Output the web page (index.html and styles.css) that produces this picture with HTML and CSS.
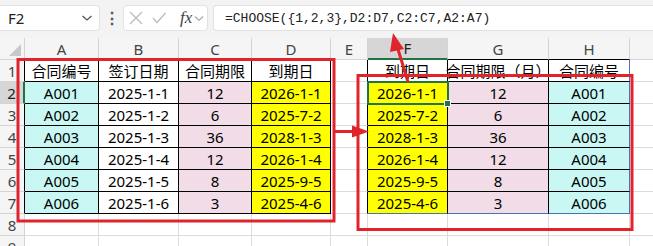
FILE: index.html
```html
<!DOCTYPE html>
<html lang="zh-CN">
<head>
<meta charset="utf-8">
<title>CHOOSE</title>
<link rel="stylesheet" href="styles.css">
</head>
<body>
<div class="app">
  <div class="fbar">
    <div class="namebox">
      <span class="name">F2</span>
      <svg class="chev" width="12" height="8" viewBox="0 0 12 8"><path d="M1.5 2 L6 6 L10.5 2" fill="none" stroke="#555" stroke-width="1.3"/></svg>
    </div>
    <div class="dots">⋮</div>
    <div class="fxbox">
      <svg width="14" height="14" viewBox="0 0 14 14"><path d="M1 1 L13 13 M13 1 L1 13" stroke="#bdbdbd" stroke-width="1.4" fill="none"/></svg>
      <svg width="14" height="12" viewBox="0 0 14 12"><path d="M1 6 L5 10.5 L13.5 1" stroke="#bdbdbd" stroke-width="1.4" fill="none"/></svg>
      <span class="fx">fx</span>
      <svg class="chev2" width="10" height="7" viewBox="0 0 10 7"><path d="M1 1.5 L5 5.5 L9 1.5" fill="none" stroke="#aaa" stroke-width="1.2"/></svg>
    </div>
    <div class="formula">=CHOOSE({1,2,3},D2:D7,C2:C7,A2:A7)</div>
  </div>

  <div class="sheet">
    <!-- header row -->
    <div class="c h corner"></div>
    <div class="c h bkb">A</div>
    <div class="c h bkb">B</div>
    <div class="c h bkb">C</div>
    <div class="c h bkb">D</div>
    <div class="c h">E</div>
    <div class="c h sel-col">F</div>
    <div class="c h bkb">G</div>
    <div class="c h bkb">H</div>
    <div class="c h"></div>

    <!-- row 1 -->
    <div class="c rh bkr">1</div>
    <div class="c bk">合同编号</div>
    <div class="c bk">签订日期</div>
    <div class="c bk">合同期限</div>
    <div class="c bk">到期日</div>
    <div class="c bkr"></div>
    <div class="c bk">到期日</div>
    <div class="c bk">合同期限（月）</div>
    <div class="c bk blr">合同编号</div>
    <div class="c"></div>

    <!-- row 2 -->
    <div class="c rh sel-row">2</div>
    <div class="c bk cy">A001</div>
    <div class="c bk">2025-1-1</div>
    <div class="c bk pk">12</div>
    <div class="c bk yl">2026-1-1</div>
    <div class="c bkr"></div>
    <div class="c bk yl active">2026-1-1</div>
    <div class="c bk pk">12</div>
    <div class="c bk cy blr">A001</div>
    <div class="c"></div>

    <!-- row 3 -->
    <div class="c rh bkr">3</div>
    <div class="c bk cy">A002</div>
    <div class="c bk">2025-1-2</div>
    <div class="c bk pk">6</div>
    <div class="c bk yl">2025-7-2</div>
    <div class="c bkr"></div>
    <div class="c bk yl">2025-7-2</div>
    <div class="c bk pk">6</div>
    <div class="c bk cy blr">A002</div>
    <div class="c"></div>

    <!-- row 4 -->
    <div class="c rh bkr">4</div>
    <div class="c bk cy">A003</div>
    <div class="c bk">2025-1-3</div>
    <div class="c bk pk">36</div>
    <div class="c bk yl">2028-1-3</div>
    <div class="c bkr"></div>
    <div class="c bk yl">2028-1-3</div>
    <div class="c bk pk">36</div>
    <div class="c bk cy blr">A003</div>
    <div class="c"></div>

    <!-- row 5 -->
    <div class="c rh bkr">5</div>
    <div class="c bk cy">A004</div>
    <div class="c bk">2025-1-4</div>
    <div class="c bk pk">12</div>
    <div class="c bk yl">2026-1-4</div>
    <div class="c bkr"></div>
    <div class="c bk yl">2026-1-4</div>
    <div class="c bk pk">12</div>
    <div class="c bk cy blr">A004</div>
    <div class="c"></div>

    <!-- row 6 -->
    <div class="c rh bkr">6</div>
    <div class="c bk cy">A005</div>
    <div class="c bk">2025-1-5</div>
    <div class="c bk pk">8</div>
    <div class="c bk yl">2025-9-5</div>
    <div class="c bkr"></div>
    <div class="c bk yl">2025-9-5</div>
    <div class="c bk pk">8</div>
    <div class="c bk cy blr">A005</div>
    <div class="c"></div>

    <!-- row 7 -->
    <div class="c rh bkr">7</div>
    <div class="c bk cy">A006</div>
    <div class="c bk">2025-1-6</div>
    <div class="c bk pk">3</div>
    <div class="c bk yl">2025-4-6</div>
    <div class="c bkr"></div>
    <div class="c bk yl blb">2025-4-6</div>
    <div class="c bk pk blb">3</div>
    <div class="c bk cy blr blb">A006</div>
    <div class="c"></div>

    <!-- row 8 -->
    <div class="c rh">8</div>
    <div class="c"></div><div class="c"></div><div class="c"></div><div class="c"></div>
    <div class="c"></div><div class="c"></div><div class="c"></div><div class="c"></div><div class="c"></div>

    <!-- row 9 -->
    <div class="c rh">9</div>
    <div class="c"></div><div class="c"></div><div class="c"></div><div class="c"></div>
    <div class="c"></div><div class="c"></div><div class="c"></div><div class="c"></div><div class="c"></div>
  </div>

  <svg class="annot" width="653" height="246" viewBox="0 0 653 246">
    <rect x="18" y="59.5" width="316" height="161.5" fill="none" stroke="#e0242c" stroke-width="3"/>
    <rect x="358" y="75.5" width="274" height="154" fill="none" stroke="#e0242c" stroke-width="3"/>
    <line x1="335" y1="131.5" x2="356" y2="131.5" stroke="#e0242c" stroke-width="3"/>
    <polygon points="352,125.5 369,131.5 352,137.5" fill="#e0242c"/>
    <line x1="408" y1="82" x2="397" y2="46" stroke="#e0242c" stroke-width="3"/>
    <polygon points="393,33 404,49 390,52" fill="#e0242c"/>
  </svg>
</div>
</body>
</html>
```

FILE: styles.css
```css
html, body {
  margin: 0;
  padding: 0;
  background: #ffffff;
}

.app {
  position: relative;
  width: 653px;
  height: 246px;
  overflow: hidden;
  font-family: "Noto Sans", "Noto Sans CJK SC", sans-serif;
}

/* formula bar */
.fbar {
  display: flex;
  align-items: center;
  height: 38px;
  background: #f3f3f3;
  box-sizing: border-box;
  padding-bottom: 2px;
}

.namebox {
  display: flex;
  align-items: center;
  justify-content: space-between;
  width: 100px;
  height: 26px;
  box-sizing: border-box;
  background: #ffffff;
  border: 1px solid #e2e2e2;
  border-left: none;
  border-radius: 0 4px 4px 0;
  padding: 0 6px 0 8px;
}

.name {
  font-size: 15px;
  color: #222;
}

.dots {
  width: 23px;
  text-align: center;
  font-size: 16px;
  color: #555;
  font-weight: bold;
}

.fxbox {
  display: flex;
  align-items: center;
  gap: 9px;
  width: 85px;
  height: 26px;
  box-sizing: border-box;
  background: #ffffff;
  border: 1px solid #e2e2e2;
  border-radius: 4px;
  padding-left: 5px;
}

.fx {
  font-family: "Liberation Serif", serif;
  font-style: italic;
  font-size: 17px;
  color: #444;
  margin-left: 5px;
}

.chev2 {
  margin-left: -7px;
}

.formula {
  flex: 1;
  margin-left: 5px;
  height: 26px;
  box-sizing: border-box;
  background: #ffffff;
  border: 1px solid #e2e2e2;
  border-right: none;
  border-radius: 4px 0 0 4px;
  padding-left: 11px;
  display: flex;
  align-items: center;
  font-family: "Liberation Mono", monospace;
  font-size: 13px;
  color: #222;
}

/* sheet grid */
.sheet {
  display: grid;
  grid-template-columns: 25px 74px 80px 73px 79px 37px 80px 101px 81px 60px;
  grid-auto-rows: 22px;
  font-size: 15px;
  color: #000;
}

.c {
  box-sizing: border-box;
  border-right: 1px solid #dcdcdc;
  border-bottom: 1px solid #dcdcdc;
  display: flex;
  align-items: center;
  justify-content: center;
  white-space: nowrap;
  overflow: visible;
  position: relative;
}

.h {
  background: #f5f5f5;
  color: #444;
  border-color: #d4d4d4;
}

.corner {
  background: #f5f5f5;
}

.corner::after {
  content: "";
  position: absolute;
  right: 3px;
  bottom: 3px;
  width: 0;
  height: 0;
  border-left: 12px solid transparent;
  border-bottom: 12px solid #c8c8c8;
}

.rh {
  background: #f5f5f5;
  color: #444;
  border-color: #d4d4d4;
}

.sel-col {
  background: #d6d6d6;
  color: #222;
  border-bottom: 2px solid #217346;
}

.sel-row {
  background: #d6d6d6;
  color: #222;
  border-right: 2px solid #217346;
}

.bk {
  border-right-color: #000;
  border-bottom-color: #000;
}

.bkr {
  border-right-color: #000;
}

.bkb {
  border-bottom-color: #000;
}

.blr {
  border-right-color: #4a72b8;
}

.blb {
  border-bottom-color: #4a72b8;
}

.cy { background: #c9f8f4; }
.pk { background: #f2dce7; }
.yl { background: #ffff00; }

.active {
  outline: 2px solid #217346;
  outline-offset: -1px;
  z-index: 1;
}

.active::after {
  content: "";
  position: absolute;
  right: -4px;
  bottom: -4px;
  width: 5px;
  height: 5px;
  background: #217346;
  border: 1px solid #ffffff;
}

.annot {
  position: absolute;
  left: 0;
  top: 0;
  pointer-events: none;
  z-index: 5;
}
```
